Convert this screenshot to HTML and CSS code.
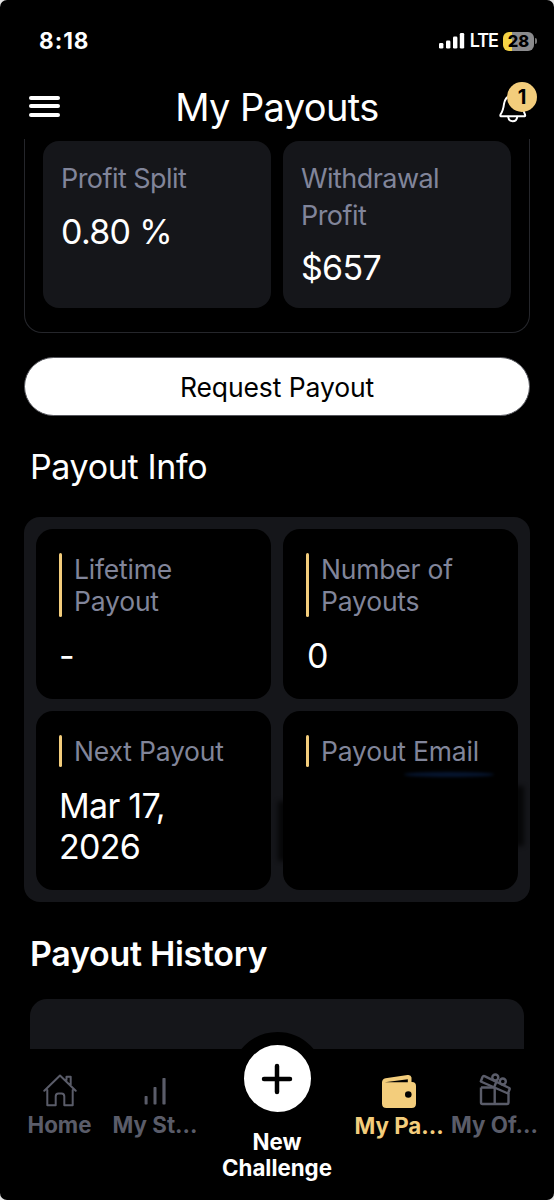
FILE: index.html
```html
<!DOCTYPE html>
<html lang="en">
<head>
<meta charset="utf-8">
<title>My Payouts</title>
<link rel="stylesheet" href="styles.css">
</head>
<body>
<div class="screen">
  <div class="status">
    <span class="time">8:18</span>
    <div class="status-right">
      <svg class="signal" width="26" height="18" viewBox="0 0 26 18" fill="#fff"><rect x="0" y="11" width="4.4" height="5.6" rx="1.3"/><rect x="7" y="8.5" width="4.4" height="8.1" rx="1.3"/><rect x="14" y="4.5" width="4.4" height="12.1" rx="1.3"/><rect x="20.8" y="1" width="4.4" height="15.6" rx="1.3"/></svg>
      <span class="lte">LTE</span>
      <div class="battery"><span>28</span></div>
      <i class="battery-cap"></i>
    </div>
  </div>
  <header class="header">
    <div class="menu"><i></i><i></i><i></i></div>
    <h1>My Payouts</h1>
    <div class="bell">
      <svg width="28" height="34" viewBox="0 0 28 34" fill="none" stroke="#fff" stroke-width="2" stroke-linejoin="round" stroke-linecap="round"><path d="M1.5 23.500C4 20 4.500 17 5 13C6 7 9 4.500 14 4.500S22 7 23 13C23.500 17 24 20 26 23.500C26.500 25 26 25.300 24.500 25.300H3C1.500 25.300 1 25 1.500 23.500Z"/><path d="M9.200 25.800C9.500 28.500 11 30.200 13.700 30.200S17.900 28.500 18.200 25.800"/></svg>
      <span class="badge">1</span>
    </div>
  </header>
  <main class="content">
    <section class="summary">
      <div class="stat"><p class="label">Profit Split</p><p class="value">0.80 %</p></div>
      <div class="stat"><p class="label">Withdrawal Profit</p><p class="value">$657</p></div>
    </section>
    <button class="request">Request Payout</button>
    <h2 class="info-title">Payout Info</h2>
    <section class="info">
      <div class="cell"><p class="caption">Lifetime<br>Payout</p><p class="value dash">-</p></div>
      <div class="cell"><p class="caption">Number of<br>Payouts</p><p class="value zero">0</p></div>
      <div class="cell"><p class="caption">Next Payout</p><p class="value">Mar 17,<br>2026</p></div>
      <div class="cell masked"><p class="caption">Payout Email</p><div class="redacted"></div></div>
    </section>
    <h2 class="history-title">Payout History</h2>
    <section class="history"></section>
  </main>
  <nav class="tabs">
    <div class="tab home">
      <svg width="34" height="34" viewBox="0 0 34 34" fill="none" stroke="#5a5c69" stroke-width="2" stroke-linejoin="round" stroke-linecap="round"><path d="M1.300 17.700L17 2.500L32.700 17.700M4.300 17V32.200H12.700V23.500Q12.700 20.500 15.500 20.500H18.500Q21.300 20.500 21.300 23.500V32.200H29.700V17M23.500 7V3.700H27.700V12"/></svg>
      <span>Home</span>
    </div>
    <div class="tab stats">
      <svg width="24" height="34" viewBox="0 0 24 34" fill="#5a5c69"><rect x="1.600" y="23" width="3" height="8.500" rx=".7"/><rect x="10.500" y="14" width="3" height="17.500" rx=".7"/><rect x="19.400" y="5" width="3.200" height="26.500" rx=".7"/></svg>
      <span>My St...</span>
    </div>
    <div class="tab challenge">
      <div class="plus"><svg width="32" height="32" viewBox="0 0 32 32" stroke="#000" stroke-width="4.500" stroke-linecap="round"><path d="M3 16H29M16 3V29"/></svg></div>
      <span>New<br>Challenge</span>
    </div>
    <div class="tab payouts">
      <svg width="36" height="36" viewBox="0 0 36 36"><path fill="#f3cd7c" d="M1 8.500Q1 5 4.500 4.300L26.500 1Q30 .5 30.500 3.500V8H31Q35 8 35 12V29.500Q35 34 30.500 34H5.500Q1 34 1 29.500Z"/><path fill="#000" d="M3.800 8.300L26.800 5.300V8.300Z"/><circle cx="27.300" cy="20.500" r="3.300" fill="#000"/></svg>
      <span>My Pa...</span>
    </div>
    <div class="tab offers">
      <svg width="34" height="34" viewBox="0 0 34 34" fill="none" stroke="#5a5c69" stroke-width="2.400" stroke-linejoin="round"><path d="M3 14.500H17M3 14.500V29.500Q3 31 4.500 31H29Q30.500 31 30.500 29.500V20M16.700 14V31"/><path d="M6.500 3.200L31.200 15Q32 15.500 31.500 16.500L30 20.500L2.800 8.500L4.500 4Q5.200 2.700 6.500 3.200Z"/><path d="M18.500 8.500L16 14.500"/><circle cx="17.300" cy="4.500" r="3"/><circle cx="24.800" cy="8.500" r="3"/></svg>
      <span>My Of...</span>
    </div>
  </nav>
</div>
</body>
</html>
```
FILE: styles.css
```css
* { box-sizing: border-box; }
body { margin: 0; background: #e4e4e4; font-family: Inter, "Liberation Sans", sans-serif; }
h1, h2, p { margin: 0; font-weight: 400; }
.screen { width: 554px; height: 1200px; background: #000; color: #fff; border-radius: 7px; overflow: hidden; display: flex; flex-direction: column; }

.status { height: 82px; flex: none; display: flex; align-items: center; justify-content: space-between; padding: 0 17px 0 39px; }
.time { font-size: 22.500px; font-weight: 700; line-height: 26px; letter-spacing: 1px; }
.status-right { display: flex; align-items: center; }
.lte { font-size: 18px; font-weight: 600; margin: 0 5px 0 5px; letter-spacing: -1px; line-height: 20px; }
.battery { width: 31px; height: 19px; border-radius: 6px; background: linear-gradient(90deg, #f5d345 28%, #8b8b8d 28%); color: #000; font-size: 16.500px; font-weight: 800; line-height: 19px; text-align: center; }
.battery-cap { width: 2px; height: 6px; margin-left: 1px; background: #777; border-radius: 0 2px 2px 0; }

.header { height: 57px; flex: none; display: grid; grid-template-columns: 60px 1fr 60px; align-items: start; padding: 0 17px; }
.menu { display: flex; flex-direction: column; gap: 4.400px; padding-top: 14px; margin-left: 12px; width: 31px; }
.menu i { height: 4px; border-radius: 2px; background: #fff; }
h1 { font-size: 38px; line-height: 51px; text-align: center; letter-spacing: -.6px; }
.bell { position: relative; padding: 9px 0 0 22px; height: 50px; }
.badge { position: absolute; top: 0; right: 0; width: 30px; height: 30px; border-radius: 50%; background: #f3cd7c; color: #000; font-weight: 700; font-size: 20px; line-height: 30px; text-align: center; }

.content { height: 910px; flex: none; overflow: hidden; padding: 0 24px; }
.summary { height: 194px; border: 1px solid #25262b; border-top: 0; border-radius: 0 0 18px 18px; padding: 2px 18px 24px; display: grid; grid-template-columns: 1fr 1fr; gap: 12px; }
.stat { background: #15161a; border-radius: 16px; padding: 20px 18px; }
.label { color: #81859a; font-size: 27px; line-height: 36.500px; letter-spacing: -.55px; }
.value { font-size: 34px; line-height: 41px; letter-spacing: -.7px; }
.stat .value { margin-top: 13px; }
.request { display: block; width: 100%; height: 59px; margin: 24px 0 0; padding: 0; border: 1.500px solid #55565c; border-radius: 30px; background: #fff; color: #000; font: 400 26.500px/58px Inter, sans-serif; letter-spacing: -.1px; }
.info-title { margin: 28px 0 0 6px; font-size: 34px; line-height: 46px; height: 73px; letter-spacing: -.35px; }
.info { height: 385px; background: #15161a; border-radius: 16px; padding: 12px; display: grid; grid-template-columns: 1fr 1fr; grid-template-rows: 170px 179px; gap: 12px; }
.cell { background: #000; border-radius: 17px; padding: 24px 23px; }
.caption { position: relative; color: #81859a; font-size: 26.500px; line-height: 32px; letter-spacing: -.2px; padding-left: 15px; white-space: nowrap; }
.caption::before { content: ""; position: absolute; left: 0; top: 0; width: 3px; height: 100%; border-radius: 2px; background: #f3cd7c; }
.cell .value { margin-top: 18px; }
.cell .zero { padding-left: 1px; }
.masked { position: relative; }
.masked::before, .masked::after { content: ""; position: absolute; width: 10px; height: 60px; background: #000; opacity: .7; filter: blur(2.500px); }
.masked::before { left: -5px; top: 90px; }
.masked::after { right: -6px; top: 75px; }
.redacted { width: 90px; height: 5px; margin: 5px 0 0 98px; border-radius: 50%; background: #06152f; filter: blur(1.500px); }
.history-title { margin: 30px 0 0 6px; height: 67px; font-size: 34px; line-height: 44px; font-weight: 600; letter-spacing: -.3px; }
.history { height: 100px; margin: 0 6px; background: #15161a; border-radius: 17px 17px 0 0; }

.tabs { height: 151px; flex: none; position: relative; display: grid; grid-template-columns: 12px 95px 96px 148px 96px 95px 12px; font-size: 22.300px; font-weight: 700; line-height: 26px; color: #5a5c69; }
.tab { display: flex; flex-direction: column; align-items: center; white-space: nowrap; }
.home { grid-column: 2; padding-top: 24px; }
.stats { grid-column: 3; padding-top: 24px; }
.tab span { margin-top: 5px; }
.challenge { grid-column: 4; color: #fff; text-align: center; margin-top: -17px; }
.plus { width: 93px; height: 93px; flex: none; border: 13px solid #000; background: #fff; border-radius: 50%; display: grid; place-items: center; }
.challenge span { margin-top: 4px; }
.payouts { grid-column: 5; padding-top: 25px; color: #f3cd7c; }
.payouts span { margin-top: 3px; }
.offers { grid-column: 6; padding-top: 24px; }
```
